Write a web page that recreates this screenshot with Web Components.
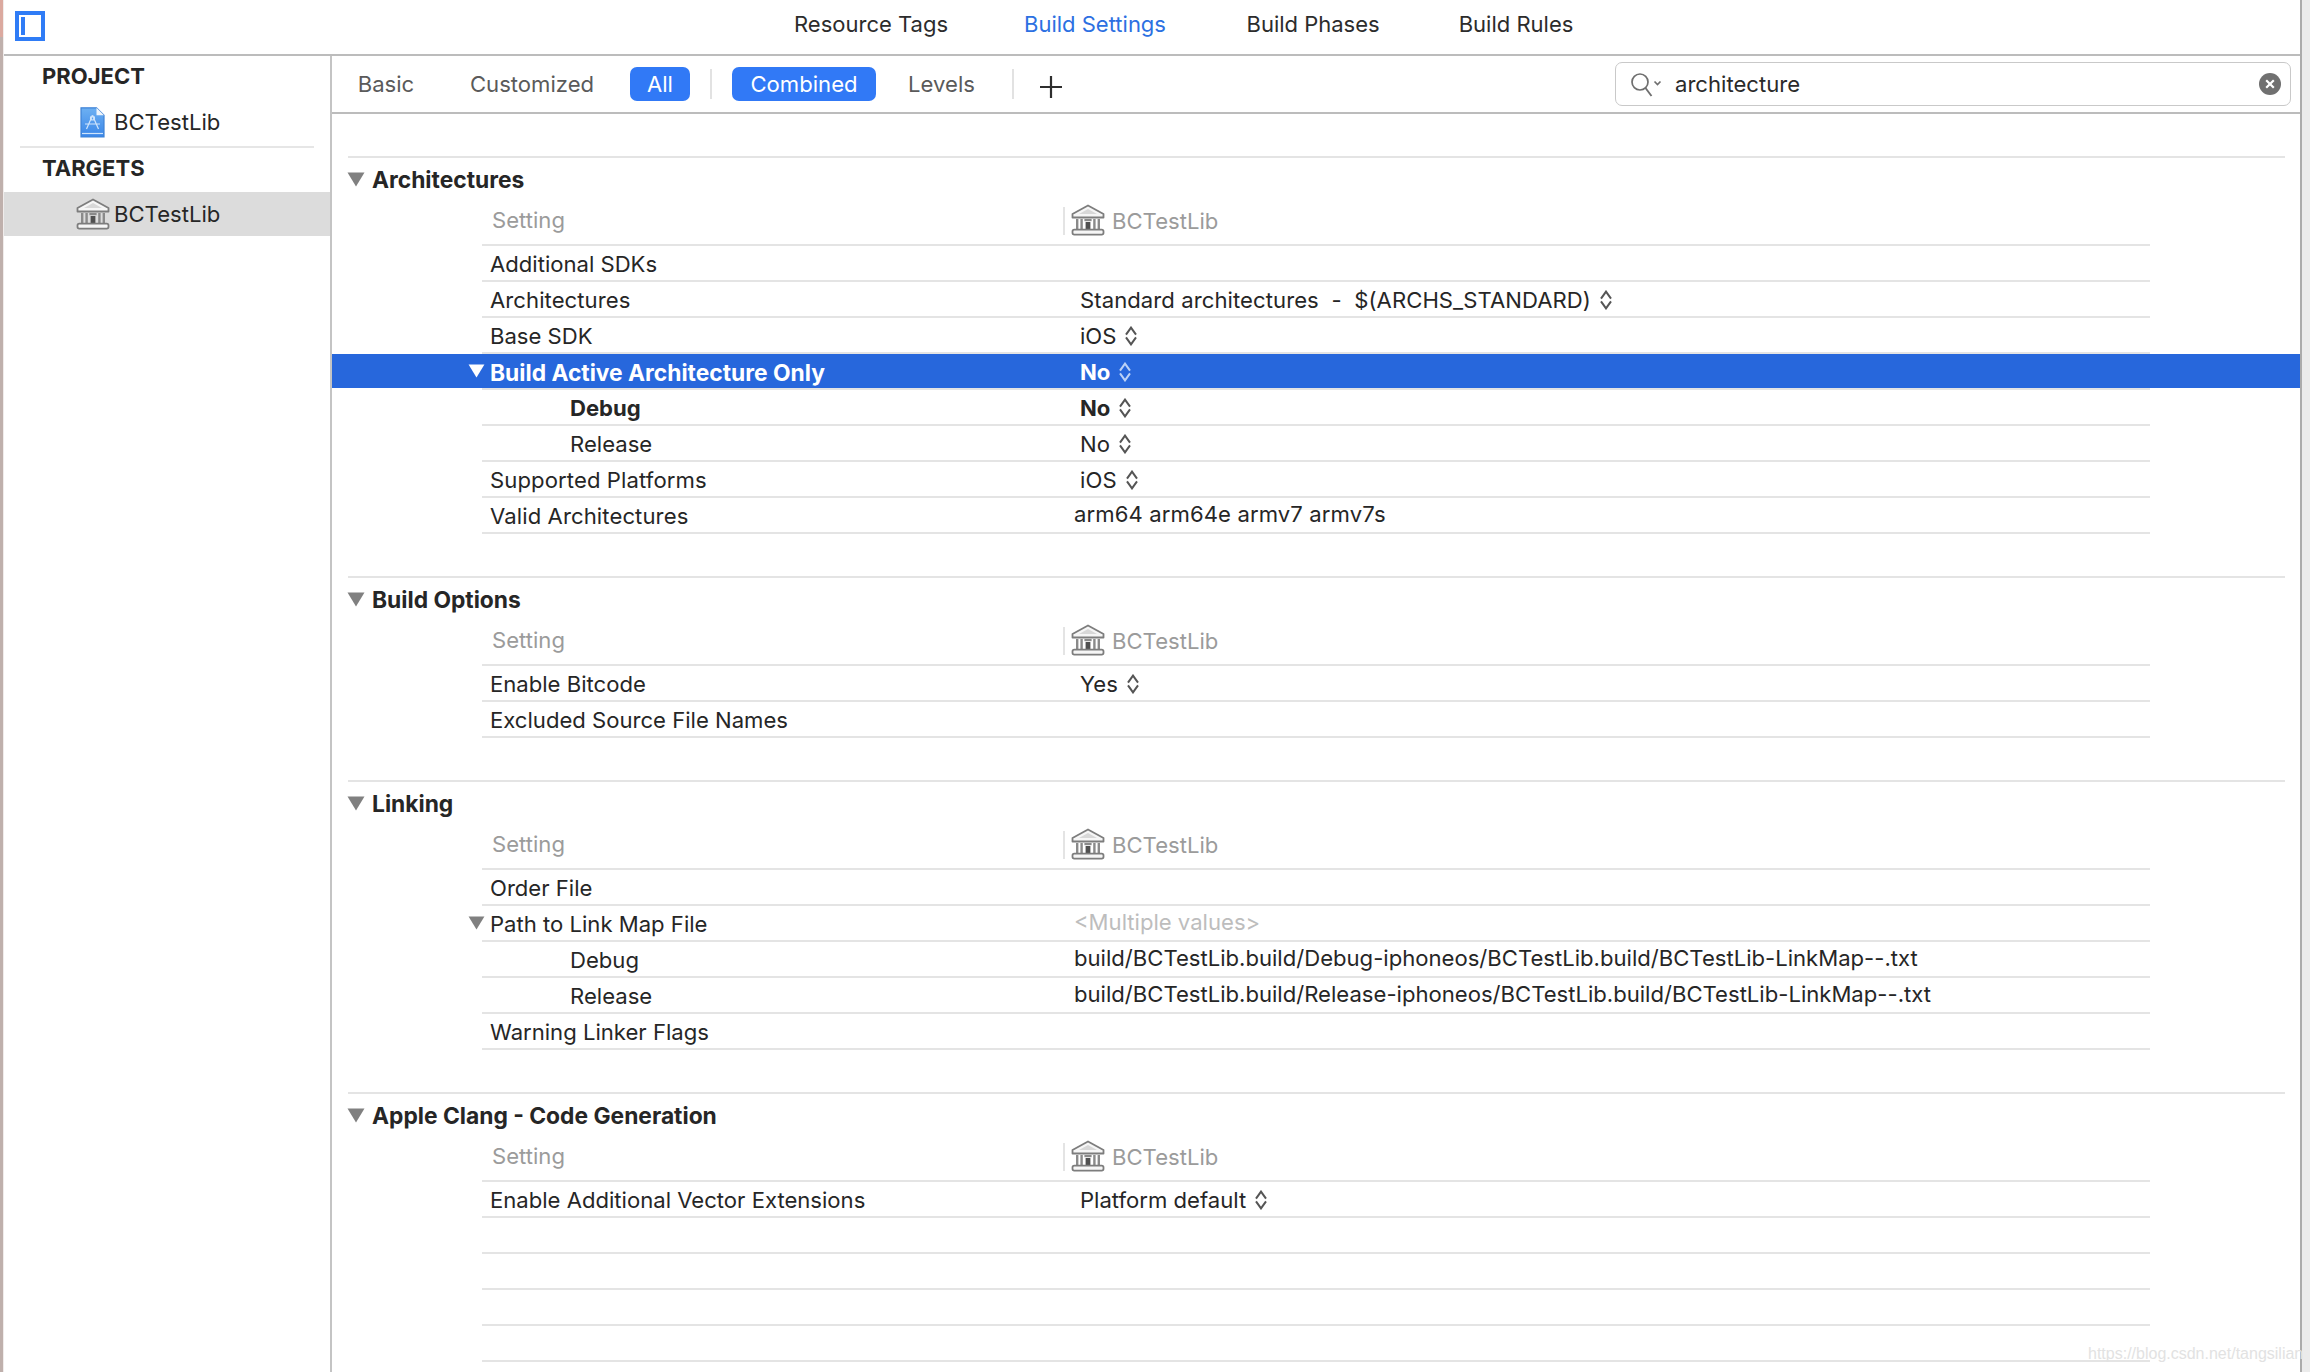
<!DOCTYPE html>
<html>
<head>
<meta charset="utf-8">
<title>Build Settings</title>
<style>
  html, body { margin: 0; padding: 0; background: #fff; }
  body { font: 22.1px Inter, "Noto Sans", sans-serif; color: #262626; width: 2310px; height: 1372px; overflow: hidden; }
</style>
</head>
<body>

<template id="temple-svg">
  <svg viewBox="0 0 34 32" width="34" height="32" xmlns="http://www.w3.org/2000/svg">
    <path d="M17 1.5 L32.5 10 V13.5 H1.5 V10 Z" fill="#f6f6f6" stroke="#7d7d7d" stroke-width="1.8" stroke-linejoin="round"/>
    <path d="M17 5 L26 10 H8 Z" fill="#d8d8d8"/>
    <g fill="#8a8a8a">
      <rect x="5" y="15" width="2.4" height="10"/><rect x="9.4" y="15" width="2.4" height="10"/>
      <rect x="22.2" y="15" width="2.4" height="10"/><rect x="26.6" y="15" width="2.4" height="10"/>
      <rect x="13.4" y="15" width="7.2" height="2.2"/>
    </g>
    <rect x="14.6" y="18" width="4.8" height="7.5" fill="#505050"/>
    <rect x="1.5" y="25.6" width="31" height="5" rx="1.8" fill="#f6f6f6" stroke="#7d7d7d" stroke-width="1.8"/>
  </svg>
</template>

<template id="stepper-svg">
  <svg viewBox="0 0 12 20" width="12" height="20" xmlns="http://www.w3.org/2000/svg" fill="none" stroke="currentColor" stroke-width="2">
    <path d="M1 8.6 L6 1.6 L11 8.6"/><path d="M1 11.4 L6 18.4 L11 11.4"/>
  </svg>
</template>

<template id="triangle-svg">
  <svg viewBox="0 0 18 15" width="18" height="15" xmlns="http://www.w3.org/2000/svg"><path d="M0.5 0.5 H17.5 L9 14.5 Z" fill="currentColor"/></svg>
</template>

<script>
  const svgFrom = id => document.getElementById(id).innerHTML;

  class AppWindow extends HTMLElement {
    constructor() {
      super();
      this.attachShadow({mode: 'open'}).innerHTML = `
        <style>
          :host { display: flex; width: 2310px; height: 1372px; position: relative; overflow: hidden; }
          .edge { width: 4px; flex: none; background: linear-gradient(#dba99f 0 37px, #bfb0ac 37px); border-right: 1px solid #f0eceb; box-sizing: border-box; }
          .main { flex: 1; min-width: 0; display: flex; flex-direction: column; }
          .body { flex: 1; min-height: 0; display: flex; }
          .gutter { width: 10px; flex: none; background: #ebebeb; border-left: 2px solid #ababab; box-sizing: border-box; }
          .mark { position: absolute; left: 2088px; top: 1345px; font: 16px "Liberation Sans", sans-serif; color: #e2e2e2; white-space: nowrap; }
        </style>
        <div class="edge"></div>
        <div class="main">
          <slot name="top"></slot>
          <div class="body"><slot name="side"></slot><slot></slot></div>
        </div>
        <div class="gutter"></div>
        <div class="mark">https://blog.csdn.net/tangsilian</div>`;
    }
  }

  class TopBar extends HTMLElement {
    constructor() {
      super();
      this.attachShadow({mode: 'open'}).innerHTML = `
        <style>
          :host { display: flex; align-items: center; height: 54px; border-bottom: 2px solid #bcbcbc; flex: none; }
          .toggle { margin: -3px 0 0 11px; width: 30px; height: 30px; box-sizing: border-box; border: 4px solid #2f7cf6; flex: none; display: flex; padding: 2px; }
          .toggle i { width: 4px; background: #2f7cf6; }
          .tabs { margin: -6px 0 0 749px; display: flex; gap: 76px; font-size: 22px; }
        </style>
        <div class="toggle"><i></i></div>
        <div class="tabs"><slot></slot></div>`;
    }
  }

  class TopTab extends HTMLElement {
    constructor() {
      super();
      this.attachShadow({mode: 'open'}).innerHTML = `
        <style>
          :host { display: block; color: #2c2c2c; white-space: nowrap; }
          :host([active]) { color: #2c70e2; }
        </style><slot></slot>`;
    }
  }

  class SideBar extends HTMLElement {
    constructor() {
      super();
      this.attachShadow({mode: 'open'}).innerHTML = `
        <style>
          :host { display: block; width: 326px; flex: none; border-right: 2px solid #c4c4c4; }
          .rule { height: 2px; background: #e6e6e6; margin: 2px 16px 0; }
        </style>
        <slot name="project"></slot>
        <div class="rule"></div>
        <slot></slot>`;
    }
  }

  class SideGroup extends HTMLElement {
    connectedCallback() {
      this.attachShadow({mode: 'open'}).innerHTML = `
        <style>
          :host { display: block; }
          .title { font-weight: 700; height: 40px; line-height: 40px; margin-bottom: 4px; padding-left: 38px; color: #262626; font-size: 22px; }
        </style>
        <div class="title">${this.getAttribute('title')}</div>
        <slot></slot>`;
    }
  }

  class SideItem extends HTMLElement {
    connectedCallback() {
      const isFile = this.getAttribute('icon') === 'file';
      const icon = isFile ? `
        <svg viewBox="0 0 25 31" width="25" height="31" xmlns="http://www.w3.org/2000/svg" style="margin-left:4px">
          <defs><linearGradient id="f" x1="0" y1="0" x2="0" y2="1"><stop offset="0" stop-color="#6db0f2"/><stop offset="1" stop-color="#3a86e8"/></linearGradient></defs>
          <path d="M1 .8 H16.5 L24 8.3 V30 H1 Z" fill="url(#f)" stroke="#3f83d6" stroke-width="1.2"/>
          <path d="M16.5 .8 V8.3 H24 Z" fill="#eef4fb"/>
          <g fill="none" stroke="#cfe4fb" stroke-width="1.2">
            <path d="M12.5 8.5 L6.5 22 M12.5 8.5 L18.5 22 M5 17 H20"/><circle cx="12.5" cy="11" r="2"/>
          </g>
          <path d="M2 26.5 H23" stroke="#cfe4fb" stroke-width="1.2"/>
        </svg>` : svgFrom('temple-svg');
      this.attachShadow({mode: 'open'}).innerHTML = `
        <style>
          :host { display: flex; align-items: center; height: 44px; padding-left: 72px; }
          :host([selected]) { background: #dcdcdc; }
          .ic { width: 38px; flex: none; display: flex; }
        </style>
        <span class="ic">${icon}</span><slot></slot>`;
    }
  }

  class SettingsPane extends HTMLElement {
    constructor() {
      super();
      this.attachShadow({mode: 'open'}).innerHTML = `
        <style>
          :host { display: flex; flex-direction: column; flex: 1; min-width: 0; overflow: hidden; }
          .list { padding-top: 42px; }
        </style>
        <slot name="filter"></slot>
        <div class="list"><slot></slot></div>`;
    }
  }

  class FilterBar extends HTMLElement {
    constructor() {
      super();
      this.attachShadow({mode: 'open'}).innerHTML = `
        <style>
          :host { display: flex; align-items: center; height: 56px; border-bottom: 2px solid #bcbcbc; flex: none; padding-left: 14px; }
          .sep { width: 2px; height: 30px; background: #e2e2e2; flex: none; }
          .plus { margin: 5px 0 0 25px; flex: none; display: flex; }
          .gap { flex: 1; }
        </style>
        <slot name="a"></slot>
        <div class="sep" style="margin-left:20px"></div>
        <slot name="b"></slot>
        <div class="sep" style="margin-left:25px"></div>
        <svg class="plus" viewBox="0 0 24 24" width="24" height="24"><path d="M12 1 V23 M1 12 H23" stroke="#2e2e2e" stroke-width="2.2" fill="none"/></svg>
        <div class="gap"></div>
        <slot name="search"></slot>`;
    }
  }

  class FilterPill extends HTMLElement {
    constructor() {
      super();
      this.attachShadow({mode: 'open'}).innerHTML = `
        <style>
          :host { display: inline-flex; align-items: center; justify-content: center; height: 34px; border-radius: 7px; color: #5a5a5a; flex: none; }
          :host([on]) { background: #3179f6; color: #fff; }
        </style><slot></slot>`;
    }
  }

  class SearchField extends HTMLElement {
    constructor() {
      super();
      this.attachShadow({mode: 'open'}).innerHTML = `
        <style>
          :host { display: flex; align-items: center; width: 676px; height: 44px; box-sizing: border-box; margin-right: 9px; border: 1.5px solid #c9c9c9; border-radius: 7px; padding: 0 9px 0 14px; }
          .q { flex: none; display: flex; margin-top: 2px; }
          .t { flex: 1; margin-left: 11px; color: #2a2a2a; }
          .x { flex: none; }
        </style>
        <svg class="q" viewBox="0 0 34 26" width="34" height="26" fill="none" stroke="#6f6f6f">
          <circle cx="10" cy="10" r="8" stroke-width="1.7"/><path d="M15.5 16 L21.5 24" stroke-width="1.9"/>
          <path d="M24.5 9.5 L27.5 12.5 L30.5 9.5" stroke-width="1.7"/>
        </svg>
        <span class="t"><slot></slot></span>
        <svg class="x" viewBox="0 0 22 22" width="22" height="22"><circle cx="11" cy="11" r="11" fill="#707070"/><path d="M7.2 7.2 L14.8 14.8 M14.8 7.2 L7.2 14.8" stroke="#fff" stroke-width="2.2" fill="none"/></svg>`;
    }
  }

  class SettingsSection extends HTMLElement {
    connectedCallback() {
      this.attachShadow({mode: 'open'}).innerHTML = `
        <style>
          :host { display: block; padding-bottom: 42px; }
          .top { margin: 0 15px 0 16px; height: 2px; background: #e4e4e4; }
          .head { height: 42px; box-sizing: border-box; padding-top: 1px; margin-left: 15px; display: flex; align-items: center; font-weight: 700; color: #262626; font-size: 22.8px; }
          .head span { display: flex; color: #808080; margin-right: 7px; }
          .cols { margin: 0 150px; height: 44px; display: grid; grid-template-columns: 581px 1fr; align-items: start; color: #9b9b9b; border-bottom: 2px solid #e4e4e4; }
          .cols .name { line-height: 41px; padding-left: 10px; }
          .cols .tgt { display: flex; align-items: center; height: 41px; }
          .cols .tgt svg { margin-top: -2px; }
          .cols .tgt i { width: 2px; height: 28px; background: #e4e4e4; margin-right: 6px; }
          .cols .tgt b { font-weight: 400; margin-left: 7px; }
        </style>
        <div class="top"></div>
        <div class="head"><span>${svgFrom('triangle-svg')}</span>${this.getAttribute('title')}</div>
        <div class="cols"><div class="name">Setting</div><div class="tgt"><i></i>${svgFrom('temple-svg')}<b>BCTestLib</b></div></div>
        <slot></slot>`;
    }
  }

  class SettingRow extends HTMLElement {
    connectedCallback() {
      const open = this.hasAttribute('open') ? svgFrom('triangle-svg') : '';
      const label = this.getAttribute('label') || '';
      const value = this.getAttribute('value') || '';
      const isStepper = this.hasAttribute('stepper');
      this.attachShadow({mode: 'open'}).innerHTML = `
        <style>
          :host { display: block; color: #262626; }
          .bar { height: 34px; display: grid; grid-template-columns: 158px 584px 1fr; align-items: center; white-space: nowrap; }
          .tri { padding-left: 136px; display: flex; color: #808080; }
          .tri svg { width: 17px; height: 14px; }
          :host([selected]) .bar { background: #2767dc; color: #fff; }
          :host([selected]) .tri { color: #fff; }
          :host([selected]) .lab { font-size: 22.8px; }
          :host([selected]) .st { color: #bcd2f6; }
          :host([strong]) .lab, :host([strong]) .val, :host([selected]) .lab, :host([selected]) .val { font-weight: 700; }
          :host([indent]) .lab { padding-left: 80px; }
          .lab { transform: translateY(1px); }
          .val { display: flex; align-items: center; gap: 9px; transform: translateY(-1px); white-space: pre; }
          :host([stepper]) .val { padding-left: 6px; transform: translateY(1px); }
          :host([muted]) .val { color: #bdbdbd; }
          .st { display: flex; color: #555; }
          .rule { height: 2px; background: #e4e4e4; margin: 0 150px; }
        </style>
        <div class="bar">
          <div class="tri">${open}</div>
          <div class="lab">${label}</div>
          <div class="val">${value.replace(/</g, '&lt;')}${isStepper ? `<span class="st">${svgFrom('stepper-svg')}</span>` : ''}</div>
        </div>
        <div class="rule"></div>`;
    }
  }

  customElements.define('app-window', AppWindow);
  customElements.define('top-bar', TopBar);
  customElements.define('top-tab', TopTab);
  customElements.define('side-bar', SideBar);
  customElements.define('side-group', SideGroup);
  customElements.define('side-item', SideItem);
  customElements.define('settings-pane', SettingsPane);
  customElements.define('filter-bar', FilterBar);
  customElements.define('filter-pill', FilterPill);
  customElements.define('search-field', SearchField);
  customElements.define('settings-section', SettingsSection);
  customElements.define('setting-row', SettingRow);
</script>

<app-window>
  <top-bar slot="top">
    <top-tab>Resource Tags</top-tab>
    <top-tab active>Build Settings</top-tab>
    <top-tab style="margin-left:4.5px">Build Phases</top-tab>
    <top-tab style="margin-left:3px">Build Rules</top-tab>
  </top-bar>

  <side-bar slot="side">
    <side-group slot="project" title="PROJECT"><side-item icon="file">BCTestLib</side-item></side-group>
    <side-group title="TARGETS"><side-item icon="temple" selected>BCTestLib</side-item></side-group>
  </side-bar>

  <settings-pane>
    <filter-bar slot="filter">
      <filter-pill slot="a" style="width:80px">Basic</filter-pill>
      <filter-pill slot="a" style="width:148px;margin-left:32px">Customized</filter-pill>
      <filter-pill slot="a" on style="width:60px;margin-left:24px">All</filter-pill>
      <filter-pill slot="b" on style="width:144px;margin-left:20px">Combined</filter-pill>
      <filter-pill slot="b" style="width:91px;margin-left:20px">Levels</filter-pill>
      <search-field slot="search">architecture</search-field>
    </filter-bar>

    <settings-section title="Architectures">
      <setting-row label="Additional SDKs"></setting-row>
      <setting-row style="letter-spacing:.07px" label="Architectures" value="Standard architectures  -  $(ARCHS_STANDARD)" stepper></setting-row>
      <setting-row label="Base SDK" value="iOS" stepper></setting-row>
      <setting-row label="Build Active Architecture Only" value="No" stepper open selected></setting-row>
      <setting-row label="Debug" value="No" stepper indent strong></setting-row>
      <setting-row label="Release" value="No" stepper indent></setting-row>
      <setting-row style="letter-spacing:.1px" label="Supported Platforms" value="iOS" stepper></setting-row>
      <setting-row style="letter-spacing:.1px" label="Valid Architectures" value="arm64 arm64e armv7 armv7s"></setting-row>
    </settings-section>

    <settings-section title="Build Options">
      <setting-row label="Enable Bitcode" value="Yes" stepper></setting-row>
      <setting-row label="Excluded Source File Names"></setting-row>
    </settings-section>

    <settings-section title="Linking">
      <setting-row label="Order File"></setting-row>
      <setting-row label="Path to Link Map File" value="<Multiple values>" open muted></setting-row>
      <setting-row label="Debug" value="build/BCTestLib.build/Debug-iphoneos/BCTestLib.build/BCTestLib-LinkMap--.txt" indent></setting-row>
      <setting-row label="Release" value="build/BCTestLib.build/Release-iphoneos/BCTestLib.build/BCTestLib-LinkMap--.txt" indent></setting-row>
      <setting-row label="Warning Linker Flags"></setting-row>
    </settings-section>

    <settings-section title="Apple Clang - Code Generation">
      <setting-row label="Enable Additional Vector Extensions" value="Platform default" stepper></setting-row>
      <setting-row></setting-row>
      <setting-row></setting-row>
      <setting-row></setting-row>
      <setting-row></setting-row>
    </settings-section>
  </settings-pane>
</app-window>

</body>
</html>
